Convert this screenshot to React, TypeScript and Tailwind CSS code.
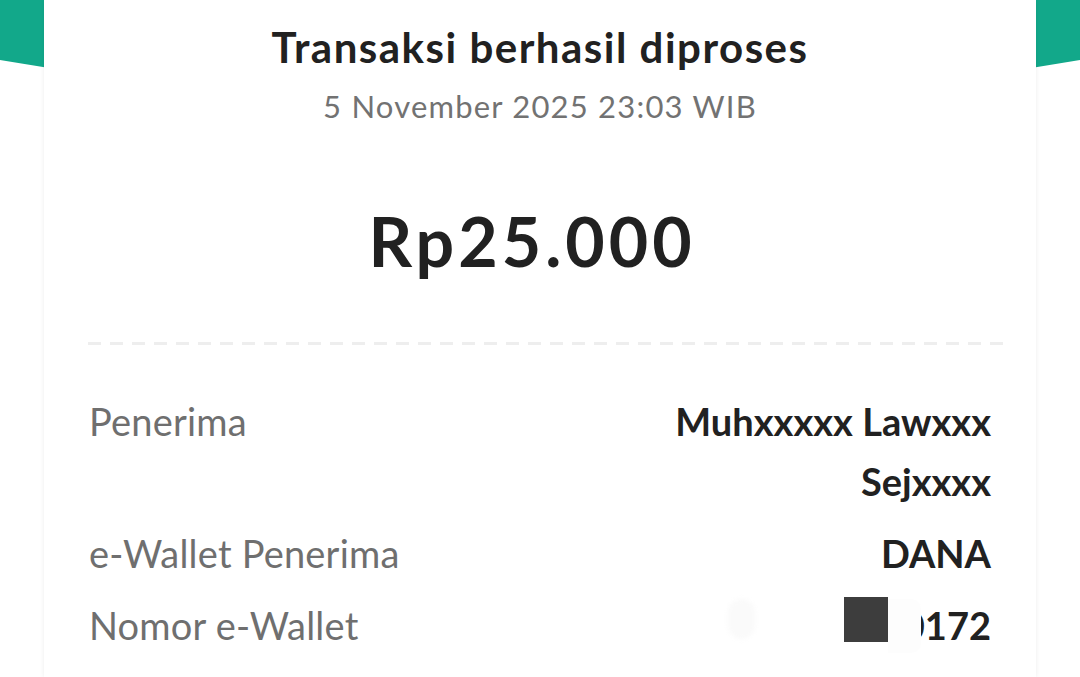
import React from 'react';

interface DetailRow {
  label: string;
  value: React.ReactNode;
}

const MaskedNumber: React.FC = () => (
  <div className="flex items-start justify-end">
    <div className="mt-[4px] mr-[89px] h-[40px] w-[27px] rounded-full bg-[#fafafa] blur-[2px]" />
    <div className="mt-[2px] h-[45px] w-[44px] bg-[#3d3d3d]" />
    <span className="relative ml-[15px]">
      0172
      <span className="absolute top-[4px] bottom-[2px] left-[-15px] w-[33px] rounded-r-[10px] bg-[#fdfdfd]" />
    </span>
  </div>
);

const rows: DetailRow[] = [
  { label: 'Penerima', value: 'Muhxxxxx Lawxxx Sejxxxx' },
  { label: 'e-Wallet Penerima', value: 'DANA' },
  { label: 'Nomor e-Wallet', value: <MaskedNumber /> },
];

export default function App() {
  return (
    <div
      className="relative h-[677px] w-[1080px] overflow-hidden bg-white"
      style={{ fontFamily: 'Lato, "Open Sans", sans-serif' }}
    >
      {/* teal header behind the card */}
      <div className="absolute top-0 left-0 h-[150px] w-full bg-[#12a88a] [clip-path:polygon(0_0,100%_0,100%_60px,50%_148px,0_60px)]" />

      <div className="relative mx-[44px] h-full bg-white px-[45px] shadow-[0_0_5px_rgba(0,0,0,0.08)]">
        <div className="pt-[21px] text-center">
          <h1 className="text-[42px] leading-[52px] font-bold tracking-[1.5px] text-[#212121]">
            Transaksi berhasil diproses
          </h1>
          <p className="mt-[13px] text-[31px] leading-[40px] tracking-[1.2px] text-[#727272]">
            5 November 2025 23:03 WIB
          </p>
          <p className="mt-[75px] pr-[16px] text-[68px] leading-[80px] font-bold tracking-[4px] text-[#212121]">
            Rp25.000
          </p>
        </div>

        <div className="mt-[61px] mr-[-12px] ml-[-1px] h-[3px] bg-[repeating-linear-gradient(to_right,#eeeeee_0,#eeeeee_13px,transparent_13px,transparent_22px)]" />

        <div className="mt-[46px] flex flex-col gap-[12px]">
          {rows.map((row) => (
            <div key={row.label} className="flex items-start justify-between text-[38px] leading-[60px]">
              <span className="tracking-[0.2px] text-[#6f6f6f]">{row.label}</span>
              <div className="max-w-[400px] text-right font-bold text-[#212121]">{row.value}</div>
            </div>
          ))}
        </div>
      </div>
    </div>
  );
}
